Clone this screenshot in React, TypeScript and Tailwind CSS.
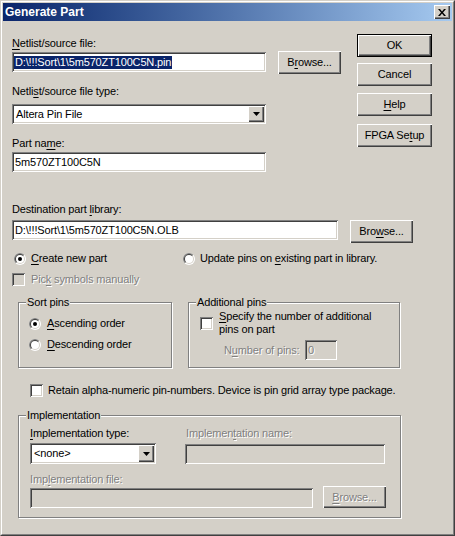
import React from "react";

const raised =
  "shadow-[inset_1px_1px_0_#fff,inset_-1px_-1px_0_#404040,inset_-2px_-2px_0_#808080]";
const defRaised =
  "shadow-[inset_1px_1px_0_#000,inset_-1px_-1px_0_#000,inset_2px_2px_0_#fff,inset_-2px_-2px_0_#404040,inset_-3px_-3px_0_#808080]";
const sunken =
  "shadow-[inset_1px_1px_0_#808080,inset_-1px_-1px_0_#fff,inset_2px_2px_0_#404040,inset_-2px_-2px_0_#d4d0c8]";
const dis = "text-[#808080] [text-shadow:1px_1px_0_#fff]";

function U({ children }: { children: React.ReactNode }) {
  return <span className="underline underline-offset-[2px]">{children}</span>;
}

function Btn({
  className = "",
  children,
  def = false,
  disabled = false,
}: {
  className?: string;
  children: React.ReactNode;
  def?: boolean;
  disabled?: boolean;
}) {
  return (
    <div
      className={`flex shrink-0 items-center justify-center bg-[#d4d0c8] leading-[13px] ${
        def ? defRaised : raised
      } ${disabled ? dis : "text-black"} ${className}`}
    >
      {children}
    </div>
  );
}

function Field({
  className = "",
  children,
  disabled = false,
}: {
  className?: string;
  children?: React.ReactNode;
  disabled?: boolean;
}) {
  return (
    <div
      className={`flex shrink-0 items-center pl-[3px] leading-[13px] ${sunken} ${
        disabled ? "bg-[#d4d0c8] text-[#808080]" : "bg-white text-black"
      } ${className}`}
    >
      {children}
    </div>
  );
}

function Arrow() {
  return (
    <svg width="7" height="4" viewBox="0 0 7 4">
      <path d="M0 0h7L3.5 4z" fill="#000" />
    </svg>
  );
}

function Combo({ className = "", text }: { className?: string; text: string }) {
  return (
    <div className={`flex shrink-0 bg-white p-[2px] leading-[13px] ${sunken} ${className}`}>
      <div className="flex flex-1 items-center pl-[2px] text-black">{text}</div>
      <div className={`flex w-[16px] items-center justify-center bg-[#d4d0c8] ${raised}`}>
        <Arrow />
      </div>
    </div>
  );
}

function Radio({ checked = false }: { checked?: boolean }) {
  return (
    <svg width="12" height="12" viewBox="0 0 12 12" className="shrink-0">
      <circle cx="6" cy="6" r="6" fill="#fff" />
      <path d="M1.757 10.243A6 6 0 0 1 10.243 1.757Z" fill="#808080" />
      <circle cx="6" cy="6" r="5" fill="#d4d0c8" />
      <path d="M2.464 9.536A5 5 0 0 1 9.536 2.464Z" fill="#404040" />
      <circle cx="6" cy="6" r="4" fill="#fff" />
      {checked && <circle cx="6" cy="6" r="2" fill="#000" />}
    </svg>
  );
}

function Check({ disabled = false }: { disabled?: boolean }) {
  return (
    <div
      className={`h-[13px] w-[13px] shrink-0 ${disabled ? "bg-[#d4d0c8]" : "bg-white"} ${sunken}`}
    />
  );
}

function Group({
  label,
  className = "",
  children,
}: {
  label: string;
  className?: string;
  children?: React.ReactNode;
}) {
  return (
    <div
      className={`relative shrink-0 border border-[#808080] shadow-[inset_1px_1px_0_#fff,1px_1px_0_#fff] ${className}`}
    >
      <span className="absolute left-[7px] top-[-7px] bg-[#d4d0c8] px-[1px] leading-[13px]">
        {label}
      </span>
      {children}
    </div>
  );
}

export default function App() {
  return (
    <div className="h-[536px] w-[455px] overflow-hidden border border-b-[#404040] border-l-[#d4d0c8] border-r-[#404040] border-t-[#d4d0c8] bg-[#d4d0c8] font-['Liberation_Sans',Arial,sans-serif] text-[11px] leading-[13px] tracking-[-0.15px] text-black">
      <div className="flex h-full flex-col border border-b-[#808080] border-l-white border-r-[#808080] border-t-white p-[1px]">
        {/* Title bar */}
        <div className="flex h-[18px] shrink-0 items-center justify-between bg-gradient-to-r from-[#0a246a] to-[#a6caf0] pl-[2px] pr-[2px]">
          <span className="text-[12px] font-bold leading-[14px] tracking-normal text-white">Generate Part</span>
          <div className={`flex h-[14px] w-[16px] items-center justify-center bg-[#d4d0c8] ${raised}`}>
            <svg width="8" height="7" viewBox="0 0 8 7">
              <path d="M0 0h2l2 2.5L6 0h2L5 3.5 8 7H6L4 4.5 2 7H0l3-3.5z" fill="#000" />
            </svg>
          </div>
        </div>

        {/* Body */}
        <div className="flex flex-1 flex-col pl-[9px]">
          <div className="flex">
            <div className="flex w-[329px] flex-col">
              <div className="mt-[16px]">
                <U>N</U>etlist/source file:
              </div>
              <div className="mt-[1px] flex items-start">
                <Field className="mt-[1px] h-[20px] w-[254px]">
                  <span className="-ml-[1px] bg-[#0a246a] pl-[1px] pr-[1px] text-white">
                    D:\!!!Sort\1\5m570ZT100C5N.pin
                  </span>
                </Field>
                <Btn className="ml-[12px] h-[23px] w-[63px]">
                  <span>
                    B<U>r</U>owse...
                  </span>
                </Btn>
              </div>
              <div className="mt-[11px]">
                Netli<U>s</U>t/source file type:
              </div>
              <Combo className="mt-[6px] h-[20px] w-[254px]" text="Altera Pin File" />
              <div className="mt-[13px]">
                Part na<U>m</U>e:
              </div>
              <Field className="mt-[2px] h-[20px] w-[254px]">5m570ZT100C5N</Field>
            </div>
            <div className="ml-[16px] flex w-[75px] flex-col">
              <Btn def className="mt-[13px] h-[23px] w-[75px]">
                OK
              </Btn>
              <Btn className="mt-[6px] h-[23px] w-[75px]">Cancel</Btn>
              <Btn className="mt-[7px] h-[23px] w-[75px]">
                <span>
                  <U>H</U>elp
                </span>
              </Btn>
              <Btn className="mt-[8px] h-[23px] w-[75px]">
                <span>
                  FPGA Se<U>t</U>up
                </span>
              </Btn>
            </div>
          </div>

          <div className="mt-[31px]">
            Destination part <U>l</U>ibrary:
          </div>
          <div className="mt-[4px] flex items-start">
            <Field className="h-[20px] w-[326px]">D:\!!!Sort\1\5m570ZT100C5N.OLB</Field>
            <Btn className="ml-[12px] h-[23px] w-[63px]">
              <span>
                Bro<U>w</U>se...
              </span>
            </Btn>
          </div>

          <div className="mt-[9px] flex h-[13px] items-center">
            <div className="flex w-[171px] items-center">
              <div className="ml-[2px]">
                <Radio checked />
              </div>
              <span className="ml-[5px]">
                <U>C</U>reate new part
              </span>
            </div>
            <Radio />
            <span className="ml-[5px]">
              Update pins on <U>e</U>xisting part in library.
            </span>
          </div>

          <div className="mt-[8px] flex h-[13px] items-center">
            <Check disabled />
            <span className={`ml-[6px] ${dis}`}>
              Pic<U>k</U> symbols manually
            </span>
          </div>

          <div className="ml-[6px] mt-[16px] flex">
            <Group label="Sort pins" className="h-[66px] w-[154px]">
              <div className="flex flex-col pl-[10px] pt-[14px]">
                <div className="flex h-[13px] items-center">
                  <Radio checked />
                  <span className="ml-[6px]">
                    <U>A</U>scending order
                  </span>
                </div>
                <div className="mt-[8px] flex h-[13px] items-center">
                  <Radio />
                  <span className="ml-[6px]">
                    <U>D</U>escending order
                  </span>
                </div>
              </div>
            </Group>
            <Group label="Additional pins" className="ml-[16px] h-[66px] w-[212px]">
              <div className="flex flex-col pl-[11px] pt-[7px]">
                <div className="flex items-center">
                  <Check />
                  <span className="ml-[6px]">
                    <U>S</U>pecify the number of additional
                    <br />
                    pins on part
                  </span>
                </div>
                <div className="ml-[24px] mt-[4px] flex items-center">
                  <span className={`w-[81px] ${dis}`}>
                    N<U>u</U>mber of pins:
                  </span>
                  <Field disabled className="h-[20px] w-[32px]">
                    <span className={dis}>0</span>
                  </Field>
                </div>
              </div>
            </Group>
          </div>

          <div className="ml-[18px] mt-[16px] flex h-[13px] items-center">
            <Check />
            <span className="ml-[5px]">
              Retain alpha-numeric pin-numbers. Device is pin grid array type package.
            </span>
          </div>

          <Group label="Implementation" className="ml-[6px] mt-[18px] h-[103px] w-[383px]">
            <div className="flex flex-col pl-[11px] pt-[11px]">
              <div className="flex">
                <div className="flex w-[126px] flex-col">
                  <span>
                    <U>I</U>mplementation type:
                  </span>
                  <Combo className="mt-[3px] h-[21px] w-[126px]" text="<none>" />
                </div>
                <div className="ml-[29px] flex w-[200px] flex-col">
                  <span className={`pl-[1px] ${dis}`}>
                    Implemen<U>t</U>ation name:
                  </span>
                  <Field disabled className="mt-[4px] h-[20px] w-[200px]" />
                </div>
              </div>
              <span className={`mt-[9px] ${dis}`}>
                Imp<U>l</U>ementation file:
              </span>
              <div className="flex items-start">
                <Field disabled className="mt-[2px] h-[20px] w-[283px]" />
                <Btn disabled className="ml-[10px] h-[22px] w-[63px]">
                  <span>
                    <U>B</U>rowse...
                  </span>
                </Btn>
              </div>
            </div>
          </Group>
        </div>
      </div>
    </div>
  );
}
